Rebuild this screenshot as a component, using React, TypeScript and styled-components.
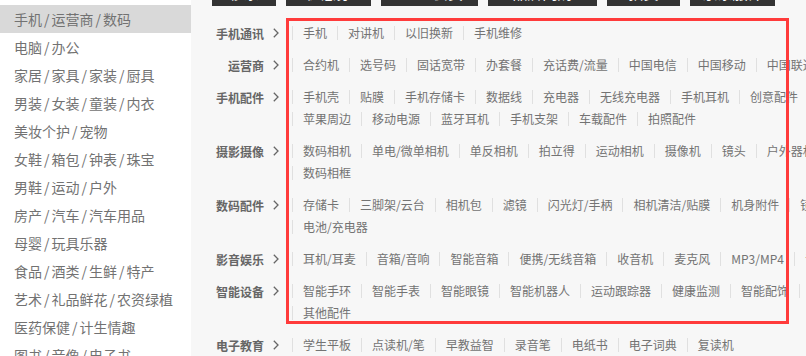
import React from 'react';
import styled, { createGlobalStyle } from 'styled-components';

const Global = createGlobalStyle`
  html, body {
    margin: 0;
    padding: 0;
    background: #f7f7f7;
  }
  body {
    font-family: "Noto Sans CJK SC", "Liberation Sans", sans-serif;
    overflow: hidden;
  }
`;

const Page = styled.div`
  position: relative;
  display: flex;
  width: 806px;
  height: 356px;
  overflow: hidden;
`;

const Sidebar = styled.ul`
  flex: 0 0 191px;
  margin: 0;
  padding: 5px 0 0;
  list-style: none;
  background: #fff;
`;

const SideItem = styled.li<{ $active?: boolean }>`
  height: 28px;
  line-height: 28px;
  padding-left: 14px;
  font-size: 14px;
  color: #727272;
  white-space: nowrap;
  background: ${(p) => (p.$active ? '#d9d9d9' : 'transparent')};
`;

const Slash = styled.span`
  margin: 0 2px;
`;

const Main = styled.div`
  flex: 1;
  padding-left: 21px;
  background: #f7f7f7;
`;

const Tabs = styled.div`
  display: flex;
  gap: 10px;
  height: 7px;
`;

const Tab = styled.div<{ $w: number }>`
  width: ${(p) => p.$w}px;
  height: 6px;
  overflow: hidden;
  background: #333;
  color: #fff;
  font-size: 15px;
  text-align: center;
`;

const TabText = styled.div`
  line-height: 20px;
  margin-top: -17px;
`;

const List = styled.div`
  margin-top: 10px;
`;

const Row = styled.div`
  display: flex;
  align-items: flex-start;
  padding: 5px 0;
`;

const Dt = styled.div`
  flex: 0 0 70px;
  box-sizing: border-box;
  padding-right: 3px;
  display: flex;
  justify-content: flex-end;
  align-items: center;
  height: 22px;
  font-size: 12px;
  font-weight: bold;
  color: #666;
  white-space: nowrap;
`;

const Chevron = styled.svg`
  margin-left: 9px;
  flex: none;
`;

const Dd = styled.div`
  display: flex;
  flex-wrap: wrap;
  width: 574px;
  margin-left: 10px;
`;

const Item = styled.span`
  height: 14px;
  line-height: 14px;
  margin: 4px 0;
  padding: 0 10px;
  border-left: 1px solid #e0e0e0;
  font-size: 12px;
  color: #737373;
  white-space: nowrap;
`;

const Highlight = styled.div`
  position: absolute;
  left: 286px;
  top: 18px;
  width: 503px;
  height: 306px;
  box-sizing: border-box;
  border: 3px solid #ff3b3b;
  pointer-events: none;
`;

const sideItems = [
  '手机/运营商/数码',
  '电脑/办公',
  '家居/家具/家装/厨具',
  '男装/女装/童装/内衣',
  '美妆个护/宠物',
  '女鞋/箱包/钟表/珠宝',
  '男鞋/运动/户外',
  '房产/汽车/汽车用品',
  '母婴/玩具乐器',
  '食品/酒类/生鲜/特产',
  '艺术/礼品鲜花/农资绿植',
  '医药保健/计生情趣',
  '图书/音像/电子书',
];

const tabs = [
  { w: 64, label: '秒杀' },
  { w: 85, label: '优惠券' },
  { w: 97, label: 'PLUS会员' },
  { w: 109, label: '品牌闪购' },
  { w: 73, label: '拍卖' },
  { w: 85, label: '京东服饰' },
];

const groups: { title: string; items: string[] }[] = [
  { title: '手机通讯', items: ['手机', '对讲机', '以旧换新', '手机维修'] },
  {
    title: '运营商',
    items: ['合约机', '选号码', '固话宽带', '办套餐', '充话费/流量', '中国电信', '中国移动', '中国联通'],
  },
  {
    title: '手机配件',
    items: [
      '手机壳', '贴膜', '手机存储卡', '数据线', '充电器', '无线充电器', '手机耳机', '创意配件',
      '苹果周边', '移动电源', '蓝牙耳机', '手机支架', '车载配件', '拍照配件',
    ],
  },
  {
    title: '摄影摄像',
    items: ['数码相机', '单电/微单相机', '单反相机', '拍立得', '运动相机', '摄像机', '镜头', '户外器材', '数码相框'],
  },
  {
    title: '数码配件',
    items: ['存储卡', '三脚架/云台', '相机包', '滤镜', '闪光灯/手柄', '相机清洁/贴膜', '机身附件', '镜头附件', '电池/充电器'],
  },
  {
    title: '影音娱乐',
    items: ['耳机/耳麦', '音箱/音响', '智能音箱', '便携/无线音箱', '收音机', '麦克风', 'MP3/MP4', '音频线'],
  },
  {
    title: '智能设备',
    items: ['智能手环', '智能手表', '智能眼镜', '智能机器人', '运动跟踪器', '健康监测', '智能配饰', '体感车', '其他配件'],
  },
  {
    title: '电子教育',
    items: ['学生平板', '点读机/笔', '早教益智', '录音笔', '电纸书', '电子词典', '复读机'],
  },
];

const SideLabel: React.FC<{ text: string }> = ({ text }) => {
  const parts = text.split('/');
  return (
    <>
      {parts.map((p, i) => (
        <React.Fragment key={i}>
          {i > 0 && <Slash>/</Slash>}
          {p}
        </React.Fragment>
      ))}
    </>
  );
};

const App: React.FC = () => (
  <Page>
    <Global />
    <Sidebar>
      {sideItems.map((s, i) => (
        <SideItem key={s} $active={i === 0}>
          <SideLabel text={s} />
        </SideItem>
      ))}
    </Sidebar>
    <Main>
      <Tabs>
        {tabs.map((t) => (
          <Tab key={t.label} $w={t.w}>
            <TabText>{t.label}</TabText>
          </Tab>
        ))}
      </Tabs>
      <List>
        {groups.map((g) => (
          <Row key={g.title}>
            <Dt>
              {g.title}
              <Chevron width="6" height="10" viewBox="0 0 6 10">
                <path d="M0.8 0.8 L5 5 L0.8 9.2" fill="none" stroke="#666" strokeWidth="1.3" />
              </Chevron>
            </Dt>
            <Dd>
              {g.items.map((it) => (
                <Item key={it}>{it}</Item>
              ))}
            </Dd>
          </Row>
        ))}
      </List>
    </Main>
    <Highlight />
  </Page>
);

export default App;
